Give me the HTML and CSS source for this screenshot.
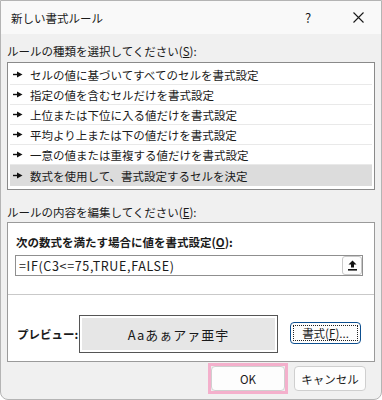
FILE: index.html
```html
<!DOCTYPE html>
<html lang="ja">
<head>
<meta charset="utf-8">
<link rel="stylesheet" href="styles.css">
</head>
<body>
<div class="dialog">
  <div class="titlebar">
    <span class="title">新しい書式ルール</span>
    <span class="help">?</span>
    <span class="close"><svg width="11" height="11" viewBox="0 0 11 11"><path d="M0.5 0.5 L10.5 10.5 M10.5 0.5 L0.5 10.5" stroke="#1a1a1a" stroke-width="1.1" fill="none"/></svg></span>
  </div>
  <div class="body">
    <div class="label l1">ルールの種類を選択してください(<u>S</u>):</div>
    <div class="list">
      <div class="item"><svg class="arr" width="10" height="7" viewBox="0 0 10 7"><rect x="0" y="2.8" width="5" height="1.4" fill="#111"/><path d="M4 0.5 L9.5 3.5 L4 6.5 Z" fill="#111"/></svg><span>セルの値に基づいてすべてのセルを書式設定</span></div>
      <div class="item"><svg class="arr" width="10" height="7" viewBox="0 0 10 7"><rect x="0" y="2.8" width="5" height="1.4" fill="#111"/><path d="M4 0.5 L9.5 3.5 L4 6.5 Z" fill="#111"/></svg><span>指定の値を含むセルだけを書式設定</span></div>
      <div class="item"><svg class="arr" width="10" height="7" viewBox="0 0 10 7"><rect x="0" y="2.8" width="5" height="1.4" fill="#111"/><path d="M4 0.5 L9.5 3.5 L4 6.5 Z" fill="#111"/></svg><span>上位または下位に入る値だけを書式設定</span></div>
      <div class="item"><svg class="arr" width="10" height="7" viewBox="0 0 10 7"><rect x="0" y="2.8" width="5" height="1.4" fill="#111"/><path d="M4 0.5 L9.5 3.5 L4 6.5 Z" fill="#111"/></svg><span>平均より上または下の値だけを書式設定</span></div>
      <div class="item"><svg class="arr" width="10" height="7" viewBox="0 0 10 7"><rect x="0" y="2.8" width="5" height="1.4" fill="#111"/><path d="M4 0.5 L9.5 3.5 L4 6.5 Z" fill="#111"/></svg><span>一意の値または重複する値だけを書式設定</span></div>
      <div class="item selected"><svg class="arr" width="10" height="7" viewBox="0 0 10 7"><rect x="0" y="2.8" width="5" height="1.4" fill="#111"/><path d="M4 0.5 L9.5 3.5 L4 6.5 Z" fill="#111"/></svg><span>数式を使用して、書式設定するセルを決定</span></div>
    </div>
    <div class="label l2">ルールの内容を編集してください(<u>E</u>):</div>
    <div class="editbox">
      <div class="bold">次の数式を満たす場合に値を書式設定(<u>O</u>):</div>
      <div class="input">
        <span class="formula">=IF(C3&lt;=75,TRUE,FALSE)</span>
        <span class="refbtn"><svg width="9" height="11" viewBox="0 0 9 11"><path d="M4.5 0.5 L8.5 4.5 H6 V7.5 H3 V4.5 H0.5 Z" fill="#111"/><rect x="0" y="9" width="9" height="1.6" fill="#111"/></svg></span>
      </div>
      <div class="sep"></div>
      <div class="preview-row">
        <span class="plabel">プレビュー:</span>
        <div class="preview"><div class="pinner">Aaあぁアァ亜宇</div></div>
        <div class="fmt"><span class="fmt-inner">書式(<u>F</u>)...</span></div>
      </div>
    </div>
    <div class="buttons">
      <div class="focusring"><div class="btn ok">OK</div></div>
      <div class="btn cancel">キャンセル</div>
    </div>
  </div>
</div>
</body>
</html>
```

FILE: styles.css
```css
* { box-sizing: border-box; }
html, body { margin: 0; padding: 0; background: #ffffff; }
body {
  font-family: "Noto Sans CJK JP", "Noto Sans", sans-serif;
  font-size: 11.5px;
  color: #1a1a1a;
}
.dialog {
  width: 382px;
  height: 400px;
  border: 1px solid #b4b4b4;
  border-radius: 0 0 8px 8px;
  background: #f0f0f0;
  overflow: hidden;
  display: flex;
  flex-direction: column;
}
.titlebar {
  height: 33px;
  background: #f9f9f9;
  display: flex;
  align-items: center;
  padding-left: 10px;
  flex-shrink: 0;
}
.title { font-size: 11.5px; flex: 1; }
.help { font-size: 13px; width: 20px; margin-right: 30px; text-align: center; }
.close { width: 20px; margin-right: 13px; display: flex; justify-content: center; }
.body {
  padding: 0 6px;
  display: flex;
  flex-direction: column;
}
.label { height: 16px; line-height: 16px; white-space: nowrap; }
.l1 { margin-top: 9px; }
.list {
  margin-top: 3px;
  height: 128px;
  border: 1px solid #8a8a8a;
  background: #ffffff;
  padding: 2px;
}
.item {
  height: 20px;
  border-bottom: 1px solid #e9e9e9;
  display: flex;
  align-items: center;
  padding-left: 3px;
  white-space: nowrap;
}
.item .arr { margin-right: 7px; }
.item.selected { background: #dcdcdc; border-bottom: none; height: 21px; }
.l2 { margin-top: 14px; }
.editbox {
  margin-top: 2px;
  height: 140px;
  border: 1px solid #9a9a9a;
  background: #ffffff;
  display: flex;
  flex-direction: column;
}
.bold {
  font-weight: bold;
  margin: 11px 0 0 8px;
  height: 16px;
  line-height: 16px;
  white-space: nowrap;
}
.input {
  margin: 5px 11px 0 7px;
  height: 21px;
  border: 1px solid #8f8f8f;
  display: flex;
  align-items: center;
  padding-left: 3px;
}
.formula { flex: 1; font-size: 12.5px; letter-spacing: 0.65px; }
.refbtn {
  width: 20px;
  height: 19px;
  border: 1px solid #c8c8c8;
  border-radius: 3px;
  background: #fdfdfd;
  display: flex;
  align-items: center;
  justify-content: center;
}
.sep {
  margin-top: 18px;
  height: 1px;
  background: #c9c9c9;
}
.preview-row {
  display: flex;
  align-items: center;
  margin-top: 20px;
  padding-left: 9px;
}
.plabel { font-weight: bold; width: 62px; white-space: nowrap; }
.preview {
  width: 199px;
  height: 38px;
  border: 1px solid #555555;
  padding: 2px;
  background: #ffffff;
}
.pinner {
  height: 100%;
  background: #e6e6e6;
  display: flex;
  align-items: center;
  justify-content: center;
  font-size: 13px;
  letter-spacing: 1px;
}
.fmt {
  margin-left: 12px;
  margin-top: -2px;
  width: 71px;
  height: 22px;
  border: 1px solid #0d4f8f;
  border-radius: 4px;
  background: #fdfdfd;
  padding: 2px;
  display: flex;
}
.fmt-inner {
  flex: 1;
  border: 1px dotted #222;
  display: flex;
  align-items: center;
  justify-content: center;
  white-space: nowrap;
}
.buttons {
  display: flex;
  justify-content: flex-end;
  align-items: center;
  margin-top: 1px;
  padding-right: 9px;
}
.focusring {
  border: 3px solid #f4b0cc;
  width: 80px;
  height: 31px;
  margin-right: 6px;
  display: flex;
}
.btn {
  border: 1px solid #cfcfcf;
  border-radius: 4px;
  background: #fdfdfd;
  display: flex;
  align-items: center;
  justify-content: center;
  white-space: nowrap;
}
.ok { flex: 1; }
.cancel { width: 72px; height: 25px; }
```
